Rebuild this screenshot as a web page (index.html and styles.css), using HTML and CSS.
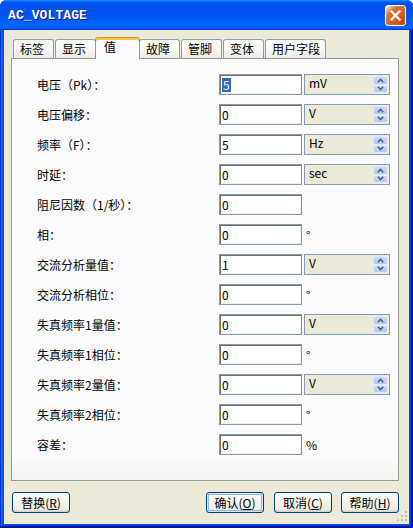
FILE: index.html
```html
<!DOCTYPE html>
<html lang="zh">
<head>
<meta charset="utf-8">
<title>AC_VOLTAGE</title>
<link rel="stylesheet" href="styles.css">
</head>
<body>
<div class="window">
  <div class="titlebar">
    <span class="title">AC_VOLTAGE</span>
    <button class="close" aria-label="关闭">
      <svg width="19" height="19" viewBox="0 0 19 19"><path d="M5.5 5.5 L13.5 13.5 M13.5 5.5 L5.5 13.5" stroke="#fff" stroke-width="2.4" stroke-linecap="square" fill="none"/></svg>
    </button>
  </div>
  <div class="frame">
    <div class="tabs">
      <div class="tab">标签</div>
      <div class="tab">显示</div>
      <div class="tab active">值</div>
      <div class="tab">故障</div>
      <div class="tab">管脚</div>
      <div class="tab">变体</div>
      <div class="tab">用户字段</div>
    </div>
    <div class="panel">
      <div class="row">
        <span class="label">电压（Pk）：</span>
        <div class="input"><span class="sel">5</span></div>
        <div class="combo"><span class="unit">mV</span><div class="spin"><span class="half"><svg width="7" height="5" viewBox="0 0 7 5"><path d="M0.8 4.2 L3.5 1.5 L6.2 4.2" stroke="#4D6185" stroke-width="1.6" fill="none"/></svg></span><span class="half"><svg width="7" height="5" viewBox="0 0 7 5"><path d="M0.8 0.8 L3.5 3.5 L6.2 0.8" stroke="#4D6185" stroke-width="1.6" fill="none"/></svg></span></div></div>
      </div>
      <div class="row">
        <span class="label">电压偏移：</span>
        <div class="input">0</div>
        <div class="combo"><span class="unit">V</span><div class="spin"><span class="half"><svg width="7" height="5" viewBox="0 0 7 5"><path d="M0.8 4.2 L3.5 1.5 L6.2 4.2" stroke="#4D6185" stroke-width="1.6" fill="none"/></svg></span><span class="half"><svg width="7" height="5" viewBox="0 0 7 5"><path d="M0.8 0.8 L3.5 3.5 L6.2 0.8" stroke="#4D6185" stroke-width="1.6" fill="none"/></svg></span></div></div>
      </div>
      <div class="row">
        <span class="label">频率（F）：</span>
        <div class="input">5</div>
        <div class="combo"><span class="unit">Hz</span><div class="spin"><span class="half"><svg width="7" height="5" viewBox="0 0 7 5"><path d="M0.8 4.2 L3.5 1.5 L6.2 4.2" stroke="#4D6185" stroke-width="1.6" fill="none"/></svg></span><span class="half"><svg width="7" height="5" viewBox="0 0 7 5"><path d="M0.8 0.8 L3.5 3.5 L6.2 0.8" stroke="#4D6185" stroke-width="1.6" fill="none"/></svg></span></div></div>
      </div>
      <div class="row">
        <span class="label">时延：</span>
        <div class="input">0</div>
        <div class="combo"><span class="unit">sec</span><div class="spin"><span class="half"><svg width="7" height="5" viewBox="0 0 7 5"><path d="M0.8 4.2 L3.5 1.5 L6.2 4.2" stroke="#4D6185" stroke-width="1.6" fill="none"/></svg></span><span class="half"><svg width="7" height="5" viewBox="0 0 7 5"><path d="M0.8 0.8 L3.5 3.5 L6.2 0.8" stroke="#4D6185" stroke-width="1.6" fill="none"/></svg></span></div></div>
      </div>
      <div class="row">
        <span class="label">阻尼因数（1/秒）：</span>
        <div class="input">0</div>
      </div>
      <div class="row">
        <span class="label">相：</span>
        <div class="input">0</div>
        <span class="sym">°</span>
      </div>
      <div class="row">
        <span class="label">交流分析量值：</span>
        <div class="input">1</div>
        <div class="combo"><span class="unit">V</span><div class="spin"><span class="half"><svg width="7" height="5" viewBox="0 0 7 5"><path d="M0.8 4.2 L3.5 1.5 L6.2 4.2" stroke="#4D6185" stroke-width="1.6" fill="none"/></svg></span><span class="half"><svg width="7" height="5" viewBox="0 0 7 5"><path d="M0.8 0.8 L3.5 3.5 L6.2 0.8" stroke="#4D6185" stroke-width="1.6" fill="none"/></svg></span></div></div>
      </div>
      <div class="row">
        <span class="label">交流分析相位：</span>
        <div class="input">0</div>
        <span class="sym">°</span>
      </div>
      <div class="row">
        <span class="label">失真频率1量值：</span>
        <div class="input">0</div>
        <div class="combo"><span class="unit">V</span><div class="spin"><span class="half"><svg width="7" height="5" viewBox="0 0 7 5"><path d="M0.8 4.2 L3.5 1.5 L6.2 4.2" stroke="#4D6185" stroke-width="1.6" fill="none"/></svg></span><span class="half"><svg width="7" height="5" viewBox="0 0 7 5"><path d="M0.8 0.8 L3.5 3.5 L6.2 0.8" stroke="#4D6185" stroke-width="1.6" fill="none"/></svg></span></div></div>
      </div>
      <div class="row">
        <span class="label">失真频率1相位：</span>
        <div class="input">0</div>
        <span class="sym">°</span>
      </div>
      <div class="row">
        <span class="label">失真频率2量值：</span>
        <div class="input">0</div>
        <div class="combo"><span class="unit">V</span><div class="spin"><span class="half"><svg width="7" height="5" viewBox="0 0 7 5"><path d="M0.8 4.2 L3.5 1.5 L6.2 4.2" stroke="#4D6185" stroke-width="1.6" fill="none"/></svg></span><span class="half"><svg width="7" height="5" viewBox="0 0 7 5"><path d="M0.8 0.8 L3.5 3.5 L6.2 0.8" stroke="#4D6185" stroke-width="1.6" fill="none"/></svg></span></div></div>
      </div>
      <div class="row">
        <span class="label">失真频率2相位：</span>
        <div class="input">0</div>
        <span class="sym">°</span>
      </div>
      <div class="row">
        <span class="label">容差：</span>
        <div class="input">0</div>
        <span class="sym">%</span>
      </div>
    </div>
    <div class="buttons">
      <button class="btn">替换(<u>R</u>)</button>
      <div class="btn-group">
        <button class="btn default">确认(<u>O</u>)</button>
        <button class="btn">取消(<u>C</u>)</button>
        <button class="btn">帮助(<u>H</u>)</button>
      </div>
    </div>
    <svg class="grip" width="12" height="12" viewBox="0 0 12 12">
      <rect x="9" y="1" width="2" height="2" fill="#C1BDAE"/>
      <rect x="5" y="5" width="2" height="2" fill="#C1BDAE"/>
      <rect x="9" y="5" width="2" height="2" fill="#C1BDAE"/>
      <rect x="1" y="9" width="2" height="2" fill="#C1BDAE"/>
      <rect x="5" y="9" width="2" height="2" fill="#C1BDAE"/>
      <rect x="9" y="9" width="2" height="2" fill="#C1BDAE"/>
    </svg>
  </div>
</div>
</body>
</html>
```
FILE: styles.css
```css
html, body {
  margin: 0;
  padding: 0;
  background: #ffffff;
}

.window {
  width: 413px;
  height: 528px;
  box-sizing: border-box;
  display: flex;
  flex-direction: column;
  border-radius: 7px 7px 0 0;
  overflow: hidden;
  background: #0855DD;
  box-shadow: inset -1px -1px #00138C, inset 1px 1px #0831D9, inset -2px -2px #001EA0, inset 2px 2px #166AEE, inset -3px -3px #003BDA, inset 3px 3px #0855DD;
  font-family: "Noto Sans CJK SC", "Noto Sans", sans-serif;
  font-size: 12px;
  color: #000;
}

.titlebar {
  height: 30px;
  flex: none;
  display: flex;
  align-items: center;
  padding: 0 7px 0 8px;
  background: linear-gradient(180deg, #0997FF 0%, #0053EE 8%, #0050EE 40%, #0066FF 88%, #0066FF 93%, #005BFF 95%, #003DD7 96%, #003DD7 100%);
}

.title {
  flex: 1;
  color: #ffffff;
  font-family: "Liberation Mono", monospace;
  font-weight: bold;
  font-size: 13px;
  letter-spacing: 0.1px;
  text-shadow: 1px 1px #0F1089;
}

.close {
  width: 21px;
  height: 21px;
  box-sizing: border-box;
  padding: 0;
  border: 1px solid #ffffff;
  border-radius: 3px;
  background: radial-gradient(circle at 90% 90%, #CC4600 0%, #DC6527 55%, #CD7546 70%, #FFCCB2 90%, #ffffff 100%);
  display: flex;
  align-items: center;
  justify-content: center;
}

.close svg {
  display: block;
}

.frame {
  flex: 1;
  margin: 0 4px 4px 4px;
  background: #ECE9D8;
  padding: 7px 10px 11px 7px;
  display: flex;
  flex-direction: column;
  position: relative;
  min-height: 0;
}

.tabs {
  height: 21px;
  flex: none;
  display: flex;
  align-items: flex-end;
  padding-left: 2px;
  position: relative;
  z-index: 1;
}

.tab {
  height: 19px;
  min-width: 41px;
  box-sizing: border-box;
  padding: 0 5px 0 6px;
  margin-right: 1px;
  border: 1px solid #919B9C;
  border-bottom: 0;
  border-radius: 3px 3px 0 0;
  background: linear-gradient(180deg, #FFFFFF 0%, #F7F6F2 60%, #ECEBE5 100%);
  line-height: 18px;
  white-space: nowrap;
}

.tab.active {
  height: 22px;
  width: 45px;
  margin: 0 -1px -1px -2px;
  padding-left: 8px;
  border-top-color: #E68B2C;
  background: #FCFCFE;
  box-shadow: inset 0 2px 0 #FFC73C;
  line-height: 18px;
  position: relative;
  z-index: 2;
}

.panel {
  height: 423px;
  flex: none;
  box-sizing: border-box;
  border: 1px solid #919B9C;
  background: linear-gradient(180deg, #FCFCFE 0%, #FCFCFE 94%, #F4F3EE 100%);
  padding: 15px 0 0 25px;
  display: flex;
  flex-direction: column;
  gap: 9px;
}

.row {
  display: flex;
  align-items: center;
  height: 21px;
}

.label {
  width: 182px;
  flex: none;
  white-space: nowrap;
  line-height: 14px;
}

.input {
  width: 83px;
  height: 21px;
  box-sizing: border-box;
  flex: none;
  border: 1px solid #7F9DB9;
  background: #ffffff;
  box-shadow: inset 1px 1px 0 #716F64, inset -1px -1px 0 #F1EFE2;
  padding-left: 2px;
  display: flex;
  align-items: center;
  line-height: 14px;
}

.sel {
  background: #316AC5;
  color: #ffffff;
  padding: 0 1px;
  line-height: 14px;
}

.combo {
  width: 86px;
  height: 21px;
  box-sizing: border-box;
  flex: none;
  margin-left: 2px;
  border: 1px solid #7F9DB9;
  background: #ECE9D8;
  display: flex;
  align-items: flex-start;
}

.unit {
  padding: 1px 0 0 4px;
  line-height: 14px;
}

.spin {
  margin: 1px 1px 0 auto;
  width: 15px;
  height: 17px;
  display: flex;
  flex-direction: column;
}

.half {
  flex: 1;
  box-sizing: border-box;
  border: 1px solid #E2EAFD;
  border-radius: 2px;
  background: linear-gradient(180deg, #C9D8FC 0%, #B4C8F6 100%);
  display: flex;
  align-items: center;
  justify-content: center;
}

.half svg {
  display: block;
}

.sym {
  margin-left: 4px;
  line-height: 14px;
}

.buttons {
  margin-top: 11px;
  height: 21px;
  flex: none;
  display: flex;
  justify-content: space-between;
  padding-left: 1px;
}

.btn-group {
  display: flex;
  gap: 9px;
}

.btn {
  width: 58px;
  height: 21px;
  box-sizing: border-box;
  padding: 0;
  border: 1px solid #003C74;
  border-radius: 3px;
  background: linear-gradient(180deg, #FFFFFF 0%, #F4F4F0 40%, #ECEBE6 86%, #D6D0C5 100%);
  font-family: "Noto Sans CJK SC", "Noto Sans", sans-serif;
  font-size: 12px;
  color: #000;
  line-height: 14px;
}

.btn u {
  text-decoration: underline;
}

.btn.default {
  margin-right: 1px;
  box-shadow: inset 0 0 0 1px #CEE7FF, inset 0 0 0 2px #98B8EA;
}

.grip {
  position: absolute;
  right: 1px;
  bottom: 2px;
}
```
